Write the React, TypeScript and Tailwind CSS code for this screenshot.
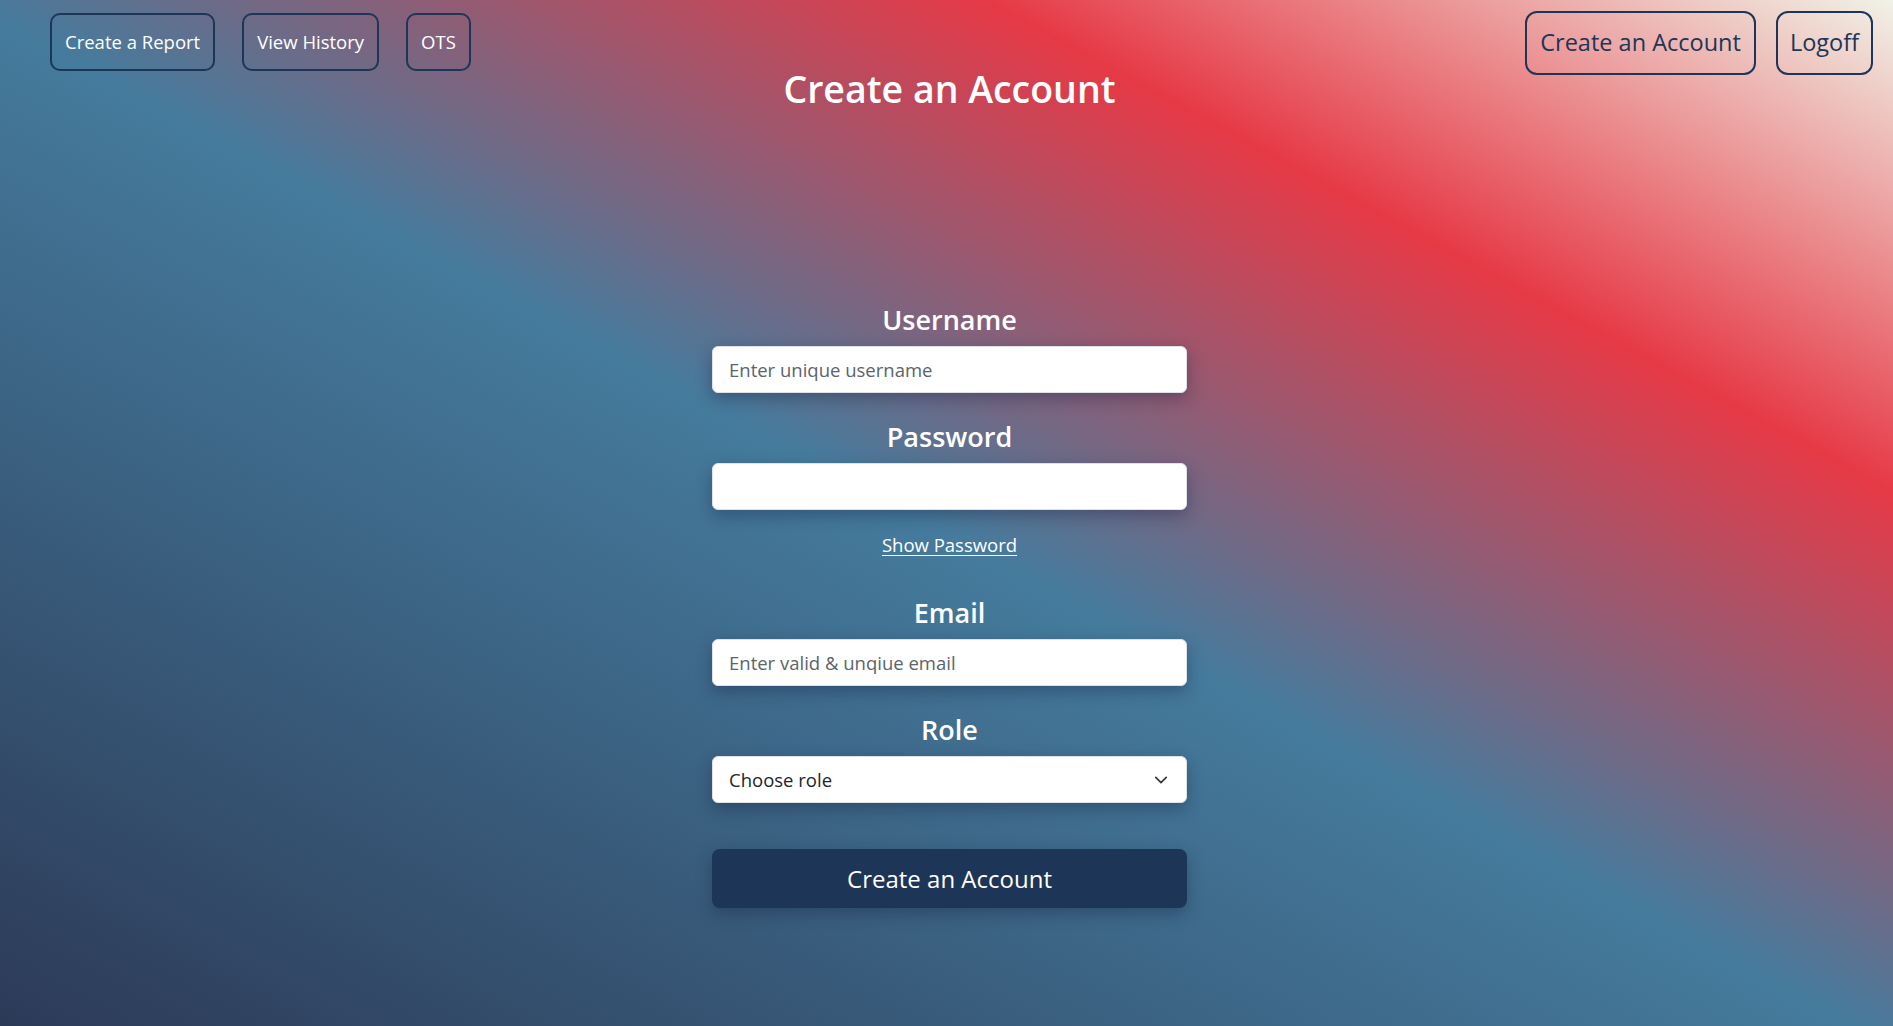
import { useState } from "react";

const font = { fontFamily: '"Open Sans", "Noto Sans", sans-serif' };

function NavButton({ label }: { label: string }) {
  return (
    <button className="h-[58px] px-[13px] rounded-[10px] border-2 border-[#1d3557] text-white text-[18.5px] whitespace-nowrap">
      {label}
    </button>
  );
}

function Label({ children }: { children: string }) {
  return (
    <label className="block text-center text-white text-[27px] leading-[36px] font-semibold mb-2">
      {children}
    </label>
  );
}

export default function App() {
  const [showPassword, setShowPassword] = useState(false);

  return (
    <div
      style={font}
      className="min-h-screen w-full bg-[linear-gradient(to_top_right,#2c3a57_0%,#457b9d_49%,#e63946_76%,#f1faee_101%)]"
    >
      <header className="grid grid-cols-[1fr_auto_1fr]">
        <div className="flex items-start gap-[27px] pl-[50px] pt-[13px]">
          <NavButton label="Create a Report" />
          <NavButton label="View History" />
          <NavButton label="OTS" />
        </div>
        <h1 className="pt-[65px] pl-[6px] text-white text-[37.5px] leading-[48px] font-semibold whitespace-nowrap">
          Create an Account
        </h1>
        <div className="flex items-start justify-end gap-[20px] pr-[20px] pt-[11px]">
          <button className="h-[64px] px-[13px] rounded-[12px] border-2 border-[#1d3557] text-[#1d3557] text-[23.5px] whitespace-nowrap">
            Create an Account
          </button>
          <button className="h-[64px] px-[12px] rounded-[12px] border-2 border-[#1d3557] text-[#1d3557] text-[23.5px]">
            Logoff
          </button>
        </div>
      </header>

      <form className="mx-auto w-[475px] pt-[189px] translate-x-[3px] flex flex-col">
        <Label>Username</Label>
        <input
          type="text"
          placeholder="Enter unique username"
          className="h-[47px] w-full rounded-md border border-[#dee2e6] bg-white px-[16px] text-[18.5px] text-[#212529] placeholder:text-[#5c636a] shadow-[0_6px_16px_rgba(20,30,60,0.35)] outline-none"
        />

        <div className="mt-[26px]">
          <Label>Password</Label>
          <input
            type={showPassword ? "text" : "password"}
            className="h-[47px] w-full rounded-md border border-[#dee2e6] bg-white px-[16px] text-[18.5px] text-[#212529] shadow-[0_6px_16px_rgba(20,30,60,0.35)] outline-none"
          />
        </div>

        <button
          type="button"
          onClick={() => setShowPassword((s) => !s)}
          className="mt-[22px] self-center text-white text-[18.5px] leading-[26px] underline underline-offset-[3px]"
        >
          Show Password
        </button>

        <div className="mt-[37px]">
          <Label>Email</Label>
          <input
            type="email"
            placeholder="Enter valid & unqiue email"
            className="h-[47px] w-full rounded-md border border-[#dee2e6] bg-white px-[16px] text-[18.5px] text-[#212529] placeholder:text-[#5c636a] shadow-[0_6px_16px_rgba(20,30,60,0.35)] outline-none"
          />
        </div>

        <div className="mt-[26px]">
          <Label>Role</Label>
          <div className="relative">
            <select
              defaultValue=""
              className="h-[47px] w-full appearance-none rounded-md border border-[#dee2e6] bg-white px-[16px] text-[18.5px] text-[#212529] shadow-[0_6px_16px_rgba(20,30,60,0.35)] outline-none"
            >
              <option value="" disabled>
                Choose role
              </option>
              <option value="admin">Admin</option>
              <option value="user">User</option>
            </select>
            <svg
              className="pointer-events-none absolute right-[19px] top-1/2 -translate-y-1/2"
              width="14"
              height="14"
              viewBox="0 0 16 16"
              fill="none"
              stroke="#343a40"
              strokeWidth="2"
              strokeLinecap="round"
              strokeLinejoin="round"
            >
              <path d="M2 5l6 6 6-6" />
            </svg>
          </div>
        </div>

        <button
          type="submit"
          className="mt-[46px] h-[59px] w-full rounded-lg bg-[#1d3557] text-white text-[24px] shadow-[0_6px_16px_rgba(20,30,60,0.35)]"
        >
          Create an Account
        </button>
      </form>
    </div>
  );
}
